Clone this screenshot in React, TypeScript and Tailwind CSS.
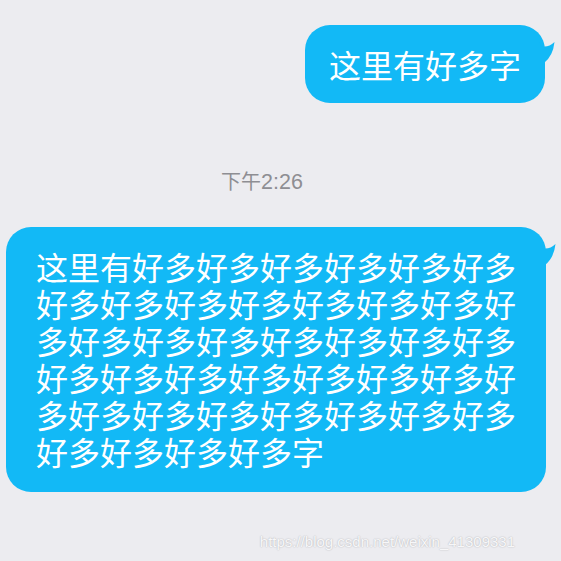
import React from "react";

const Tail = () => (
  <svg
    className="absolute left-[calc(100%-6px)] top-[14px]"
    width="18"
    height="28"
    viewBox="0 0 18 28"
  >
    <path d="M0 3 L2 7 Q9 9 15.5 3 Q14 17 5 24 L0 24 Z" fill="#12b9f6" />
  </svg>
);

const longText = "这里有" + "好多".repeat(40) + "字";

export default function App() {
  return (
    <div
      className="w-[561px] h-[561px] bg-[#ececf0] flex flex-col overflow-hidden"
      style={{ fontFamily: '"Noto Sans CJK SC", "Liberation Sans", sans-serif' }}
    >
      <div className="flex justify-end pr-[16px] pt-[25px]">
        <div className="relative h-[78px] w-[240px] rounded-[25px] bg-[#12b9f6] flex items-center pl-[24px] text-white text-[32px] leading-[37px]">
          这里有好多字
          <Tail />
        </div>
      </div>

      <div
        className="pl-[221px] mt-[66px] h-[24px] text-[20px] leading-[24px] text-[#8e8e93]"
        style={{ fontFamily: '"Liberation Sans", "Noto Sans CJK SC", sans-serif' }}
      >
        <span style={{ fontFamily: '"Noto Sans CJK SC", sans-serif' }}>下午</span>
        <span className="text-[21.5px]">2:26</span>
      </div>

      <div className="pl-[6px] mt-[34px]">
        <div className="relative w-[540px] rounded-[25px] bg-[#12b9f6] pl-[30px] pr-[28px] pt-[21px] pb-[22px] text-white text-[32px] leading-[37px] break-all">
          {longText}
          <Tail />
        </div>
      </div>

      <div className="flex justify-end pr-[46px] mt-[41px]">
        <span
          className="text-[15px] leading-[18px] text-[#f7f7f9] [text-shadow:0_0_1.5px_rgba(0,0,0,0.3)]"
          style={{ fontFamily: '"Liberation Sans", sans-serif' }}
        >
          https://blog.csdn.net/weixin_41309331
        </span>
      </div>
    </div>
  );
}
